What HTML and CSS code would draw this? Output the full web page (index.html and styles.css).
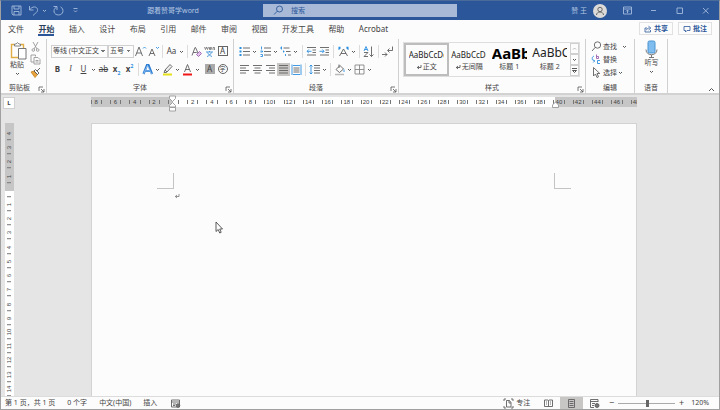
FILE: index.html
```html
<!DOCTYPE html>
<html lang="zh-CN">
<head>
  <meta charset="UTF-8">
  <meta name="viewport" content="width=device-width, initial-scale=1.0">
  <title>跟着赞哥学word</title>
  <link rel="stylesheet" href="styles.css">
</head>
<body>
  <!-- Shared icons -->
  <svg class="sprite" aria-hidden="true">
    <symbol id="caret" viewBox="0 0 7 7"><path d="M2 3l1.500 1.500L5 3" fill="none" stroke="currentColor" stroke-width=".9"/></symbol>
    <symbol id="launcher" viewBox="0 0 7 7"><path d="M1 5V1h4M3 3l3 3M6 3v3H3" fill="none" stroke="#555" stroke-width=".8"/></symbol>
    <symbol id="enter" viewBox="0 0 6 6"><path d="M5 1v2.500H1.500M3 2L1.300 3.500 3 5" fill="none" stroke="currentColor" stroke-width=".8"/></symbol>
  </svg>

  <!-- Title bar -->
  <header class="titlebar">
    <div class="quick">
      <button type="button" aria-label="保存"><svg class="icon" viewBox="0 0 13 13"><path d="M2 2h9v9H3L2 10zM4 2v3h5V2M4 11V7.500h5V11"/></svg></button>
      <button type="button" aria-label="撤消"><svg class="icon" viewBox="0 0 13 13"><path d="M2.500 2v4h4M2.500 6C5 2 10 2 10.500 5.500 11 8 8.500 9 6 11.500"/></svg></button>
      <button type="button" class="drop" aria-label="更多撤消"><svg class="mini"><use href="#caret"/></svg></button>
      <button type="button" aria-label="重复"><svg class="icon" viewBox="0 0 13 13"><path d="M1.500 2.500H5v3.500M4.500 3C0 6 2 11 6.500 11 11.500 11 12.500 5 8.500 2.800"/></svg></button>
      <button type="button" class="drop customize" aria-label="自定义"><svg class="mini" viewBox="0 0 7 7"><path d="M1.500 1.500h4M2 3.500L3.500 5 5 3.500" fill="none" stroke="currentColor" stroke-width=".8"/></svg></button>
      <span class="doc-title">跟着赞哥学word</span>
    </div>
    <label class="search">
      <svg class="icon" viewBox="0 0 13 13"><circle cx="7.500" cy="5" r="3"/><path d="M5.300 7.200L2 10.500"/></svg>
      <input type="search" placeholder="搜索" aria-label="搜索">
    </label>
    <div class="window">
      <span>赞 王</span>
      <svg class="avatar" viewBox="0 0 14 14"><circle cx="7" cy="7" r="7" fill="#dcdad8"/><circle cx="7" cy="5.500" r="2.200" fill="none" stroke="#666"/><path d="M3.500 11c0-4 7-4 7 0" fill="none" stroke="#666"/></svg>
      <button type="button" aria-label="功能区显示选项"><svg class="icon" viewBox="0 0 13 13"><path d="M2.500 3h8v7h-8zM2.500 5h8M6.500 9V6.200M5 7.500l1.500-1.500L8 7.500"/></svg></button>
      <button type="button" aria-label="最小化"><svg class="icon" viewBox="0 0 13 13"><path d="M4 6.500h5"/></svg></button>
      <button type="button" aria-label="最大化"><svg class="icon" viewBox="0 0 13 13"><path d="M4 4h5.500v5.500H4z"/></svg></button>
      <button type="button" aria-label="关闭"><svg class="icon" viewBox="0 0 13 13"><path d="M4 4l5.500 5.500M9.500 4L4 9.500"/></svg></button>
    </div>
  </header>

  <!-- Tabs -->
  <div class="tabbar">
    <nav class="tabs">
      <a href="#">文件</a>
      <a href="#" class="active">开始</a>
      <a href="#">插入</a>
      <a href="#">设计</a>
      <a href="#">布局</a>
      <a href="#">引用</a>
      <a href="#">邮件</a>
      <a href="#">审阅</a>
      <a href="#">视图</a>
      <a href="#">开发工具</a>
      <a href="#">帮助</a>
      <a href="#">Acrobat</a>
    </nav>
    <div class="share">
      <button type="button"><svg viewBox="0 0 8 8"><path d="M3 3H1v4h5.500V5M2.500 5.200C3 3.500 4 3 5.500 3M4.500 1.200L6.800 3 4.500 5"/></svg>共享</button>
      <button type="button"><svg viewBox="0 0 8 8"><path d="M1 1.500h6v4H4L2.500 7V5.500H1z"/></svg>批注</button>
    </div>
  </div>

  <!-- Ribbon -->
  <div class="ribbon">
    <section class="group clipboard">
      <div class="clip-body">
        <button type="button" class="big">
          <svg class="paste" viewBox="0 0 17 18"><path d="M4 2.500H1.500v13H8M11 2.500h2.500V6" fill="none" stroke="#e0ad45" stroke-width="1.400"/><path d="M4.500 4V2h1.500L7.500.700 9 2h1.500v2z" fill="#fff" stroke="#666" stroke-width=".8"/><path d="M8.500 6.500h7.500v10.500H8.500z" fill="#fff" stroke="#666" stroke-width=".9"/></svg>
          粘贴
          <svg class="mini"><use href="#caret"/></svg>
        </button>
        <div class="clip-side">
          <button type="button" aria-label="剪切"><svg class="icon" viewBox="0 0 13 13"><path d="M4 2l4 7M9 2L5 9" stroke="#999"/><circle cx="4.300" cy="10" r="1.300" stroke="#999"/><circle cx="8.700" cy="10" r="1.300" stroke="#999"/></svg></button>
          <button type="button" aria-label="复制"><svg class="icon" viewBox="0 0 13 13"><path d="M5 9H2V2h4.500v1.500M5 4.500h4l2 2V11H5zM6.500 7.500h3M6.500 9h3" stroke="#999"/></svg></button>
          <button type="button" aria-label="格式刷"><svg class="icon" viewBox="0 0 13 13"><path d="M2 6l3-1 3.500 3.500L6 11.500z" fill="#e8a33d" stroke="#c98a2b"/><path d="M5 5l1.500-1.500 3.500 3.500L8.500 8.500zM8 5l3-3" stroke="#555"/></svg></button>
        </div>
      </div>
      <h2>剪贴板</h2>
      <button type="button" class="launch" aria-label="剪贴板设置"><svg class="mini"><use href="#launcher"/></svg></button>
    </section>

    <section class="group font">
      <div class="row">
        <select class="face" aria-label="字体"><option>等线 (中文正文)</option></select>
        <select class="size" aria-label="字号"><option>五号</option></select>
        <button type="button" aria-label="增大字号"><svg class="icon" viewBox="0 0 13 13"><path d="M1.500 11l3.500-9 3.500 9M2.700 8h4.600"/><path d="M9 3.500L10.500 2 12 3.500" stroke="#2b8fe0"/></svg></button>
        <button type="button" aria-label="减小字号"><svg class="icon" viewBox="0 0 13 13"><path d="M2 11l3-7 3 7M3 8.500h4"/><path d="M9 2L10.500 3.500 12 2" stroke="#2b8fe0"/></svg></button>
        <i class="sep"></i>
        <button type="button">Aa</button>
        <button type="button" class="drop" aria-label="更改大小写选项"><svg class="mini"><use href="#caret"/></svg></button>
        <i class="sep"></i>
        <button type="button" aria-label="清除格式"><svg class="icon" viewBox="0 0 13 13"><path d="M2 10.500L5 2.500h.500L8 8M3.200 7.500h3.500"/><path d="M6.500 9.500l3-3 2 2-3 3z" fill="#e3c3ea" stroke="#9b5fae"/></svg></button>
        <button type="button" aria-label="拼音指南"><svg class="icon" viewBox="0 0 13 13"><path d="M1.500 2l1 2.500 1-2.500 1 2.500 1-2.500M6.500 3.500h2V2.500h-2v2h2M10 5V2.500h1.500v2.500" stroke-width=".7"/><path d="M3 7h7M6.500 6v1M4.500 7.500c1 2 2.500 3.300 4.500 4M8.500 7.500c-1 2-2.500 3.300-4.500 4" stroke="#3b8fd6"/></svg></button>
        <button type="button" class="framed"><span>A</span></button>
      </div>
      <div class="row">
        <button type="button" class="bold">B</button>
        <button type="button" class="italic">I</button>
        <button type="button" class="under">U</button>
        <button type="button" class="drop" aria-label="下划线选项"><svg class="mini"><use href="#caret"/></svg></button>
        <button type="button" class="strike">ab</button>
        <button type="button" class="script">x<sub>2</sub></button>
        <button type="button" class="script">x<sup>2</sup></button>
        <i class="sep"></i>
        <button type="button" aria-label="文本效果"><svg class="icon" viewBox="0 0 13 13"><path d="M2.500 11L6 2h1.500L11 11M4.500 8h4.500" stroke="#2b7cd3" stroke-width="2.200"/><path d="M2.500 11L6.500 2.500 10.500 11M4.500 8h4" stroke="#c8e4fa" stroke-width=".6"/></svg></button>
        <button type="button" class="drop" aria-label="文本效果选项"><svg class="mini"><use href="#caret"/></svg></button>
        <button type="button" aria-label="突出显示"><svg class="icon" viewBox="0 0 13 13"><path d="M4 7l5-5.500 2 2L6 9zM4 7L3 9.500h2l1-.5" fill="#eee"/><path d="M2 11.500h9" stroke="#e6e01c" stroke-width="2"/></svg></button>
        <button type="button" class="drop" aria-label="突出显示颜色"><svg class="mini"><use href="#caret"/></svg></button>
        <button type="button" aria-label="字体颜色"><svg class="icon" viewBox="0 0 13 13"><path d="M3.500 9l3-7.500L9.500 9M4.500 6.500h4"/><path d="M2 11.500h9" stroke="#f01818" stroke-width="2"/></svg></button>
        <button type="button" class="drop" aria-label="选择字体颜色"><svg class="mini"><use href="#caret"/></svg></button>
        <button type="button" class="shaded push"><span>A</span></button>
        <button type="button" class="circled"><span>字</span></button>
      </div>
      <h2>字体</h2>
      <button type="button" class="launch" aria-label="字体设置"><svg class="mini"><use href="#launcher"/></svg></button>
    </section>

    <section class="group paragraph">
      <div class="row spread">
        <button type="button" aria-label="项目符号"><svg class="icon" viewBox="0 0 13 13"><path d="M5 3h7M5 6.500h7M5 10h7"/><path d="M1.500 3h2M1.500 6.500h2M1.500 10h2" stroke="#2b8fe0" stroke-width="2"/></svg></button>
        <button type="button" class="drop" aria-label="项目符号选项"><svg class="mini"><use href="#caret"/></svg></button>
        <button type="button" aria-label="编号"><svg class="icon" viewBox="0 0 13 13"><path d="M5 3h7M5 6.500h7M5 10h7"/><path d="M2.500 1.500v3M1.500 6h2v1h-2M1.500 9.500h2v2h-2" stroke="#2b8fe0"/></svg></button>
        <button type="button" class="drop" aria-label="编号选项"><svg class="mini"><use href="#caret"/></svg></button>
        <button type="button" aria-label="多级列表"><svg class="icon" viewBox="0 0 13 13"><path d="M4.500 3h6M7 6.500h4.500M9 10h3"/><path d="M1 3h2M2.500 1.500v3M4 6.500h1.500M4.500 5.500v2M6.500 9v2" stroke="#2b8fe0"/></svg></button>
        <button type="button" class="drop" aria-label="多级列表选项"><svg class="mini"><use href="#caret"/></svg></button>
        <i class="sep"></i>
        <button type="button" aria-label="减少缩进量"><svg class="icon" viewBox="0 0 13 13"><path d="M2 2.500h9M7.500 5h3.500M7.500 7.500h3.500M2 10h9"/><path d="M6.500 6.300H2M3.800 4.500L2 6.300 3.800 8" stroke="#2b8fe0"/></svg></button>
        <button type="button" aria-label="增加缩进量"><svg class="icon" viewBox="0 0 13 13"><path d="M2 2.500h9M7.500 5h3.500M7.500 7.500h3.500M2 10h9"/><path d="M1.500 6.300H6M4.300 4.500L6 6.300 4.300 8" stroke="#2b8fe0"/></svg></button>
        <i class="sep"></i>
        <button type="button" aria-label="中文版式"><svg class="icon" viewBox="0 0 13 13"><path d="M2.500 11l4-7 4 7M4 8.500h5"/><path d="M1.500 2.500h2M1.500 4.500l2-2M9.500 2.500h2M11.500 4.500l-2-2" stroke="#2b8fe0" stroke-width="1.300"/></svg></button>
        <button type="button" class="drop" aria-label="中文版式选项"><svg class="mini"><use href="#caret"/></svg></button>
        <i class="sep"></i>
        <button type="button" aria-label="排序"><svg class="icon" viewBox="0 0 13 13"><path d="M2 6l2-4.500L6 6M2.700 4.500h2.600" stroke="#2b8fe0"/><path d="M2 7.500h4L2 11.500h4M9.500 1.500v10M7.500 9.500l2 2 2-2"/></svg></button>
        <i class="sep"></i>
        <button type="button" aria-label="显示编辑标记"><svg class="icon" viewBox="0 0 13 13"><path d="M11.500 1.500v4H7M8.500 3.500L6.500 5.500l2 2M1 9.500h5M4 7.500l2 2-2 2"/></svg></button>
      </div>
      <div class="row">
        <button type="button" aria-label="左对齐"><svg class="icon" viewBox="0 0 13 13"><path d="M2 2.500h9M2 5h6M2 7.500h9M2 10h6"/></svg></button>
        <button type="button" aria-label="居中"><svg class="icon" viewBox="0 0 13 13"><path d="M2 2.500h9M3.500 5h6M2 7.500h9M3.500 10h6"/></svg></button>
        <button type="button" aria-label="右对齐"><svg class="icon" viewBox="0 0 13 13"><path d="M2 2.500h9M5 5h6M2 7.500h9M5 10h6"/></svg></button>
        <button type="button" class="on" aria-label="两端对齐"><svg class="icon" viewBox="0 0 13 13"><path d="M2 2.500h9M2 5h9M2 7.500h9M2 10h9"/></svg></button>
        <button type="button" aria-label="分散对齐"><svg class="icon" viewBox="0 0 13 13"><path d="M3.500 5h6M3.500 7h6M3.500 9h6"/><path d="M2 1.500v10.500M11 1.500v10.500M3 2.500h7M3 11.500h7" stroke="#2b8fe0"/></svg></button>
        <i class="sep"></i>
        <button type="button" aria-label="行距"><svg class="icon" viewBox="0 0 13 13"><path d="M6 2.500h6M6 5h6M6 7.500h6M6 10h6"/><path d="M3 2v9M1.500 3.500L3 2l1.500 1.500M1.500 9.500L3 11l1.500-1.500" stroke="#2b8fe0"/></svg></button>
        <button type="button" class="drop" aria-label="行距选项"><svg class="mini"><use href="#caret"/></svg></button>
        <i class="sep"></i>
        <button type="button" aria-label="底纹"><svg class="icon" viewBox="0 0 13 13"><path d="M3 6.500L7 2.500l3.500 3.500-4 3.500zM6 1.500V5"/><path d="M11 6.500v2.500" stroke="#2b8fe0"/><path d="M2 11.500h9" stroke="#bbb" stroke-width="1.500"/></svg></button>
        <button type="button" class="drop" aria-label="底纹选项"><svg class="mini"><use href="#caret"/></svg></button>
        <button type="button" aria-label="边框"><svg class="icon" viewBox="0 0 13 13"><path d="M2 2h9v9H2zM6.500 2v9M2 6.500h9" stroke="#888"/></svg></button>
        <button type="button" class="drop" aria-label="边框选项"><svg class="mini"><use href="#caret"/></svg></button>
      </div>
      <h2>段落</h2>
      <button type="button" class="launch" aria-label="段落设置"><svg class="mini"><use href="#launcher"/></svg></button>
    </section>

    <section class="group styles">
      <div class="gallery">
        <button type="button" class="style selected"><b class="body-text">AaBbCcDd</b><span><svg><use href="#enter"/></svg>正文</span></button>
        <button type="button" class="style"><b class="body-text">AaBbCcDd</b><span><svg><use href="#enter"/></svg>无间隔</span></button>
        <button type="button" class="style"><b class="title-one">AaBb</b><span>标题 1</span></button>
        <button type="button" class="style"><b class="title-two">AaBbC</b><span>标题 2</span></button>
        <div class="scroller">
          <button type="button" class="off" aria-label="上一行"><svg class="mini" viewBox="0 0 7 7"><path d="M2 4.500L3.500 3 5 4.500" fill="none" stroke="currentColor"/></svg></button>
          <button type="button" aria-label="下一行"><svg class="mini"><use href="#caret"/></svg></button>
          <button type="button" aria-label="其他"><svg class="mini" viewBox="0 0 7 7"><path d="M1 1.500h5M1.500 3.500h4l-2 2z" fill="none" stroke="currentColor" stroke-width=".9"/></svg></button>
        </div>
      </div>
      <h2>样式</h2>
      <button type="button" class="launch" aria-label="样式设置"><svg class="mini"><use href="#launcher"/></svg></button>
    </section>

    <section class="group editing">
      <div class="edit-list">
        <button type="button"><svg class="icon" viewBox="0 0 13 13"><circle cx="7.500" cy="5" r="3.200"/><path d="M5.300 7.300L2 11"/></svg>查找<svg class="mini far"><use href="#caret"/></svg></button>
        <button type="button"><svg class="icon" viewBox="0 0 13 13"><path d="M6.500 1.500v4h2v-2h-2" stroke="#9b5fae"/><path d="M4 3C1.500 4 1.500 7.500 4.500 8M3.200 6.500l1.500 1.500L3.200 9.500M10 7.500H7.500v3H10" stroke="#2b8fe0"/></svg>替换</button>
        <button type="button"><svg class="icon" viewBox="0 0 13 13"><path d="M3.500 1.500v8.500l2-2 1.500 3.500 1.500-.7L7 7.500h2.800z"/></svg>选择<svg class="mini"><use href="#caret"/></svg></button>
      </div>
      <h2>编辑</h2>
    </section>

    <section class="group voice">
      <button type="button" class="big">
        <svg class="mic" viewBox="0 0 13 18"><rect x="3" y="1" width="7" height="12" rx="1.500" fill="#7fbdf0" stroke="#4a93d0"/><path d="M1 9.500c0 7 11 7 11 0M6.500 15v2.500M4 17.500h5" fill="none" stroke="#777"/></svg>
        听写
        <svg class="mini"><use href="#caret"/></svg>
      </button>
      <h2>语音</h2>
    </section>
    <button type="button" class="collapse" aria-label="折叠功能区"><svg class="mini" viewBox="0 0 7 7"><path d="M1 5l2.500-2.500L6 5" fill="none" stroke="#555"/></svg></button>
  </div>

  <!-- Document area -->
  <main class="workspace">
    <button type="button" class="tabstop" aria-label="制表符">L</button>
    <div class="ruler">
      <div class="marks" id="hMarks"></div>
      <svg class="indent left" viewBox="0 0 9 17"><path d="M1.500 1h6v2.500l-3 3-3-3zM4.500 7.500l3 3V12h-6v-1.500zM1.500 12.500h6V16h-6z" fill="#fff" stroke="#999" stroke-width=".9"/></svg>
      <svg class="indent right" viewBox="0 0 9 17"><path d="M4.500 7l3 3v2.500h-6V10z" fill="#fff" stroke="#999" stroke-width=".9"/></svg>
    </div>
    <div class="vruler" id="vMarks"></div>
    <article class="page">
      <div class="corners"><i></i><i></i></div>
      <p><svg><use href="#enter"/></svg></p>
    </article>
    <svg class="pointer" viewBox="0 0 8 13"><path d="M1 1v9.500l2.200-2 1.500 3.500 1.500-.7-1.500-3.300h2.800z" fill="#fff" stroke="#333" stroke-width=".8"/></svg>
  </main>

  <!-- Status bar -->
  <footer class="status">
    <span>第 1 页，共 1 页</span>
    <span>0 个字</span>
    <span>中文(中国)</span>
    <span>插入</span>
    <svg class="icon" viewBox="0 0 13 13"><path d="M2.500 3h8v7h-8zM2.500 5h8M4 7h3M4 8.500h2"/><circle cx="9" cy="8.500" r="1.800" fill="#777"/></svg>
    <div class="views">
      <button type="button" class="focus"><svg class="icon" viewBox="0 0 13 13"><path d="M2 4V2h2M9 2h2v2M11 9v2H9M4 11H2V9M4.500 3.500h3l1.500 2V10H4.500zM7 3.500V6h2"/></svg>专注</button>
      <button type="button" aria-label="阅读视图"><svg class="icon" viewBox="0 0 13 13"><path d="M2.500 3h3.500l.5.500.5-.5h3.500v6.500H7l-.5.500-.5-.5H2.500zM6.500 3.500V10M4 5h1M4 7h1M8 5h1M8 7h1"/></svg></button>
      <button type="button" class="on" aria-label="页面视图"><svg class="icon" viewBox="0 0 13 13"><path d="M3.500 2.500h6v8h-6zM4.500 4.500h4M4.500 6.500h4M4.500 8.500h4"/></svg></button>
      <button type="button" aria-label="Web 版式视图"><svg class="icon" viewBox="0 0 13 13"><path d="M10 5V2.500H2.500v8H6M2.500 4.500H10M4 6.500h3M4 8.500h2"/><circle cx="9" cy="8.500" r="2" fill="#777"/></svg></button>
    </div>
    <div class="zoom">
      <button type="button" aria-label="缩小">−</button>
      <input type="range" min="10" max="220" value="120" aria-label="缩放">
      <button type="button" aria-label="放大">+</button>
      <span>120%</span>
    </div>
  </footer>

  <script>
    // even numbers counted outwards from the left margin
    const hMarks = document.getElementById("hMarks");
    for (let n = -8; n <= 48; n += 2) {
      const mark = document.createElement("span");
      mark.textContent = n === 0 ? "" : Math.abs(n);
      hMarks.appendChild(mark);
    }

    const vMarks = document.getElementById("vMarks");
    for (let n = -4; n <= 14; n++) {
      const mark = document.createElement("span");
      mark.textContent = n === 0 ? "" : Math.abs(n);
      vMarks.appendChild(mark);
    }
  </script>
</body>
</html>
```

FILE: styles.css
```css
* {
  box-sizing: border-box;
}

body {
  margin: 0;
  height: 100vh;
  display: flex;
  flex-direction: column;
  overflow: hidden;
  border: 1px solid #a0a0a0;
  border-top-color: #4a6a9a;
  background: #fcfcfc;
  color: #444;
  font-family: "Noto Sans", "Noto Sans CJK SC", sans-serif;
  font-size: 7px;
  line-height: 10px;
}

button, input, select {
  margin: 0;
  padding: 0;
  border: 0;
  background: none;
  color: inherit;
  font: inherit;
}

button {
  display: flex;
  align-items: center;
  justify-content: center;
}

svg {
  display: block;
  flex: none;
}

.sprite {
  position: absolute;
  width: 0;
  height: 0;
}

.icon {
  width: 13px;
  height: 13px;
  fill: none;
  stroke: #606060;
  stroke-width: 0.9;
}

.mini {
  width: 7px;
  height: 7px;
}

/* title bar */
.titlebar {
  flex: none;
  display: grid;
  grid-template-columns: 1fr 27% 1fr;
  align-items: center;
  height: 19px;
  background: #2b579a;
  color: #b4c6e2;
}

.titlebar .icon {
  stroke: #a5bbdc;
}

.quick {
  display: flex;
  align-items: center;
  gap: 4px;
  padding-left: 9px;
}

.quick .drop {
  margin-left: -3px;
}

.quick .customize {
  margin-left: 3px;
}

.doc-title {
  margin: 0 auto;
}

.search {
  display: flex;
  align-items: center;
  gap: 6px;
  height: 13px;
  padding-left: 9px;
  background: #a7b9d7;
}

.titlebar .search .icon {
  stroke: #2b579a;
}

.search input {
  flex: 1;
  min-width: 0;
  outline: 0;
}

.search input::placeholder {
  color: #2b579a;
}

.window {
  display: flex;
  align-items: center;
  justify-content: flex-end;
  gap: 13px;
  padding-right: 7px;
}

.window span {
  margin-right: -7px;
}

.avatar {
  width: 14px;
  height: 14px;
  margin-right: 1px;
}

/* tabs */
.tabbar {
  flex: none;
  display: flex;
  justify-content: space-between;
  height: 19px;
  padding: 0 7px;
}

.tabs {
  display: flex;
  justify-content: space-between;
  width: 54%;
  font-size: 8px;
}

.tabs a {
  padding-top: 3px;
  height: 16px;
  line-height: 11px;
  color: #444;
  text-decoration: none;
}

.tabs .active {
  border-bottom: 2px solid #2b579a;
  color: #2c3f5c;
  font-weight: bold;
}

.share {
  display: flex;
  gap: 5px;
  padding-top: 2px;
}

.share button {
  gap: 2px;
  width: 34px;
  height: 13px;
  border: 1px solid #e1e1e1;
  color: #2b579a;
  font-weight: bold;
}

.share svg {
  width: 8px;
  height: 8px;
  fill: none;
  stroke: #2b579a;
  stroke-width: 0.8;
}

/* ribbon */
.ribbon {
  position: relative;
  flex: none;
  display: flex;
  height: 56px;
  border-bottom: 2px solid #d2d2d2;
}

.group {
  position: relative;
  display: flex;
  flex-direction: column;
  height: 54px;
  padding: 3px 4px 0;
  border-right: 1px solid #d0d0d0;
}

.group h2 {
  margin: auto 0 0;
  font-size: 7px;
  font-weight: normal;
  text-align: center;
}

.clipboard, .voice {
  padding-top: 1px;
}

.clipboard {
  width: 46px;
}

.font {
  width: 187px;
}

.paragraph {
  width: 165px;
}

.styles {
  width: 187px;
}

.editing {
  width: 49px;
}

.voice {
  width: 33px;
}

.launch {
  position: absolute;
  right: 1px;
  bottom: 0;
}

.clipboard h2 {
  padding-right: 8px;
}

.collapse {
  position: absolute;
  right: 4px;
  bottom: 0;
}

.clip-body {
  display: flex;
  justify-content: space-between;
}

.big {
  flex-direction: column;
  width: 25px;
}

.paste {
  width: 17px;
  height: 18px;
  margin-left: 2px;
}

.mic {
  width: 13px;
  height: 18px;
}

.row {
  display: flex;
  align-items: center;
  height: 18px;
}

.spread {
  justify-content: space-between;
}

.row button {
  width: 13px;
  height: 13px;
  flex: none;
  font-size: 8px;
}

.row .drop, .drop {
  width: 7px;
}

.row .push {
  margin-left: auto;
}

.row .on, .views .on {
  background: #c8c6c4;
}

.sep {
  flex: none;
  width: 5px;
  height: 13px;
  background: linear-gradient(#dcdcdc, #dcdcdc) center / 1px 100% no-repeat;
}

select {
  height: 13px;
  padding-left: 1px;
  border: 1px solid #d0d0d0;
  appearance: none;
  background: linear-gradient(45deg, transparent 50%, #777 50%) right 4px center / 2px 2px no-repeat,
    linear-gradient(-45deg, transparent 50%, #777 50%) right 2px center / 2px 2px no-repeat;
}

.face {
  width: 57px;
  padding-right: 8px;
}

.size {
  width: 27px;
}

.row sup, .row sub {
  align-self: flex-start;
  font-size: 5px;
  line-height: 6px;
  color: #2b8fe0;
}

.row sub {
  align-self: flex-end;
}

.framed span, .shaded span, .circled span {
  width: 10px;
  height: 10px;
  border: 1px solid #666;
  line-height: 8px;
}

.shaded span {
  border-color: #aaa;
  background: #aaa;
}

.circled span {
  border-radius: 50%;
  font-size: 6px;
}

.bold, .script {
  font-weight: bold;
}

.italic {
  font-family: "Liberation Serif", serif;
  font-style: italic;
}

.under {
  text-decoration: underline;
}

.strike {
  text-decoration: line-through;
}

/* style gallery */
.gallery {
  display: flex;
  height: 35px;
  border: 1px solid #dedede;
  margin-right: 1px;
}

.style {
  flex: 1;
  min-width: 0;
  flex-direction: column;
  justify-content: flex-end;
  padding: 0 2px 4px;
  overflow: hidden;
}

.style.selected {
  padding-bottom: 2px;
  border: 2px solid #bdbdbd;
}

.style b {
  width: 35px;
  overflow: hidden;
  color: #222;
  font-weight: normal;
  line-height: 18px;
  text-align: left;
  white-space: nowrap;
}

.style span {
  display: flex;
  align-items: center;
  gap: 1px;
}

.style svg {
  width: 6px;
  height: 6px;
}

.style .body-text {
  font-size: 8px;
  line-height: 15px;
}

.style .title-one {
  font-size: 15px;
  font-weight: bold;
  color: #000;
}

.style .title-two {
  font-size: 12px;
}

.scroller {
  display: grid;
  width: 9px;
}

.scroller button {
  border: 1px solid #d0d0d0;
}

.scroller .off {
  color: #bbb;
}

.edit-list {
  display: flex;
  flex-direction: column;
  align-items: flex-start;
  margin-top: -2px;
}

.edit-list button {
  height: 13px;
}

.edit-list .far {
  margin-left: 4px;
}

/* document */
.workspace {
  position: relative;
  flex: 1;
  min-height: 0;
  display: grid;
  grid-template-columns: 12px 1fr;
  grid-template-rows: 28px 1fr;
  justify-items: center;
  padding: 0 7px 0 2px;
  overflow: hidden;
  background: #e5e5e5;
}

.tabstop {
  align-self: start;
  width: 12px;
  height: 12px;
  margin-top: 2px;
  border: 1px solid #d0d0d0;
  background: #fff;
  font-size: 6px;
  font-weight: bold;
}

.ruler, .page {
  width: 100%;
  max-width: 546px;
}

.ruler {
  position: relative;
  align-self: start;
  height: 10px;
  margin-top: 2px;
  background: linear-gradient(to right, #c6c6c6 15%, #fff 15%, #fff 85%, #c6c6c6 85%);
}

.marks {
  display: flex;
  height: 10px;
  overflow: hidden;
}

.marks span {
  flex: 1 0 0;
  position: relative;
  font: 6px/10px "Liberation Sans", sans-serif;
  text-align: center;
  background: linear-gradient(#777, #777) 23% 50% / 1px 4px no-repeat,
    linear-gradient(#777, #777) 79% 50% / 1px 4px no-repeat;
}

.marks span:first-child {
  margin-left: -4px;
}

.marks span:last-child {
  margin-right: -9px;
}

.indent {
  position: absolute;
  top: -2px;
  width: 9px;
  height: 17px;
}

.indent.left {
  left: calc(15% - 4px);
}

.indent.right {
  left: calc(85% - 4px);
}

.vruler {
  display: grid;
  grid-auto-rows: 1fr;
  width: 9px;
  min-height: 0;
  padding-top: 3px;
  background: linear-gradient(#c6c6c6 25%, #fff 25%);
}

.vruler span {
  min-height: 0;
  writing-mode: vertical-rl;
  transform: rotate(180deg);
  font: 6px/9px "Liberation Sans", sans-serif;
  text-align: center;
  background: linear-gradient(#777, #777) 50% 0 / 4px 1px no-repeat;
}

.page {
  padding: 49px 65px 0;
  border: 1px solid #d2d2d2;
  border-bottom: 0;
  background: #fcfcfc;
}

.corners {
  display: flex;
  justify-content: space-between;
}

.corners i {
  width: 17px;
  height: 16px;
  border: solid #c4c4c4;
  border-width: 0 1px 1px 0;
}

.corners i:last-child {
  border-width: 0 0 1px 1px;
}

.page p {
  margin: 4px 0 0 17px;
  color: #777;
}

.page p svg {
  width: 6px;
  height: 6px;
}

.pointer {
  position: absolute;
  left: 214px;
  top: 126px;
  width: 8px;
  height: 13px;
}

/* status bar */
.status {
  flex: none;
  display: flex;
  align-items: center;
  gap: 12px;
  height: 13px;
  padding: 0 10px 0 4px;
  border-top: 1px solid #dcdcdc;
}

.views {
  display: flex;
  margin-left: auto;
}

.views button {
  width: 23px;
  height: 12px;
}

.views .focus {
  width: auto;
  gap: 1px;
  margin-right: 7px;
}

.zoom {
  display: flex;
  align-items: center;
  gap: 3px;
  margin-left: -10px;
}

.zoom button {
  width: 7px;
  font-size: 9px;
}

.zoom span {
  margin-left: 3px;
}

.zoom input {
  width: 57px;
  height: 9px;
  appearance: none;
  background: linear-gradient(#aaa, #aaa) center / 100% 1px no-repeat;
}

.zoom input::-webkit-slider-thumb {
  appearance: none;
  width: 3px;
  height: 7px;
  background: #666;
}
```
